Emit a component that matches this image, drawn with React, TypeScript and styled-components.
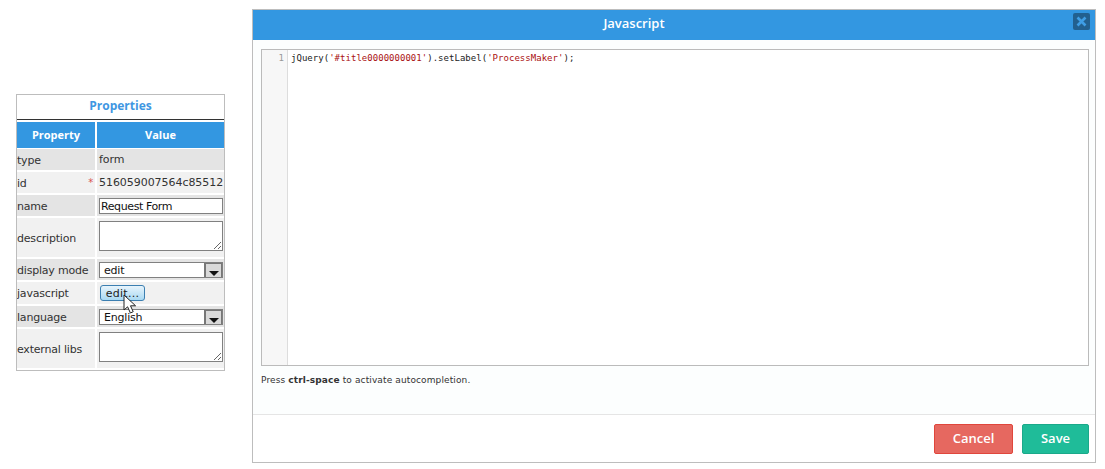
import styled, { createGlobalStyle } from 'styled-components'

const GlobalStyle = createGlobalStyle`
    html, body {
        margin: 0;
        padding: 0;
        background: #fff;
    }
    * {
        box-sizing: border-box;
    }
`

const rows = [
    { label: 'type', kind: 'text', value: 'form', height: 21, shade: 'dark' },
    { label: 'id', kind: 'text', value: '516059007564c85512', height: 21, shade: 'light', required: true },
    { label: 'name', kind: 'input', value: 'Request Form', height: 21, shade: 'dark' },
    { label: 'description', kind: 'textarea', value: '', height: 39, shade: 'light' },
    { label: 'display mode', kind: 'select', value: 'edit', height: 21, shade: 'dark' },
    { label: 'javascript', kind: 'button', value: 'edit...', height: 22, shade: 'light' },
    { label: 'language', kind: 'select', value: 'English', height: 21, shade: 'dark' },
    { label: 'external libs', kind: 'textarea', value: '', height: 39, shade: 'light' },
] as const

const App = () => {
    return (
        <Page>
            <GlobalStyle />
            <Panel>
                <PanelTitle>Properties</PanelTitle>
                <Grid>
                    <HeaderCell>Property</HeaderCell>
                    <HeaderCell>Value</HeaderCell>
                    {rows.map((row) => (
                        <Row key={row.label} $height={row.height}>
                            <LabelCell $shade={row.shade}>
                                {row.label}
                                {'required' in row && <Required>*</Required>}
                            </LabelCell>
                            <ValueCell $shade={row.shade} $top={row.kind === 'textarea'}>
                                {row.kind === 'text' && <ValueText>{row.value}</ValueText>}
                                {row.kind === 'input' && <TextInput defaultValue={row.value} />}
                                {row.kind === 'textarea' && <TextArea />}
                                {row.kind === 'select' && (
                                    <SelectBox>
                                        <SelectValue>{row.value}</SelectValue>
                                        <SelectArrow>
                                            <svg width="10" height="5" viewBox="0 0 10 5">
                                                <path d="M0 0h10L5 5z" fill="#111" />
                                            </svg>
                                        </SelectArrow>
                                    </SelectBox>
                                )}
                                {row.kind === 'button' && (
                                    <EditButton>
                                        {row.value}
                                        <Pointer width="14" height="21" viewBox="0 0 14 21">
                                            <path d="M1 1v15l3.6-3.2L7.4 19l2.8-1.3-2.7-5.9H12.6z" fill="#fff" stroke="#222" strokeWidth="1" />
                                        </Pointer>
                                    </EditButton>
                                )}
                            </ValueCell>
                        </Row>
                    ))}
                </Grid>
            </Panel>
            <Modal>
                <ModalHeader>
                    Javascript
                    <CloseButton>
                        <svg width="11" height="11" viewBox="0 0 11 11">
                            <path d="M1.5 1.5l8 8M9.5 1.5l-8 8" stroke="#3f9ee5" strokeWidth="2.6" fill="none" />
                        </svg>
                    </CloseButton>
                </ModalHeader>
                <ModalBody>
                    <Editor>
                        <Gutter>1</Gutter>
                        <Code>
                            jQuery(<Str>'#title0000000001'</Str>).setLabel(<Str>'ProcessMaker'</Str>);
                        </Code>
                    </Editor>
                    <Hint>
                        Press <strong>ctrl-space</strong> to activate autocompletion.
                    </Hint>
                </ModalBody>
                <ModalFooter>
                    <ActionButton $bg="#e66860" $border="#e0463c">Cancel</ActionButton>
                    <ActionButton $bg="#1fbc99" $border="#1ba98a" $width={67}>Save</ActionButton>
                </ModalFooter>
            </Modal>
        </Page>
    )
}

const Page = styled.div`
    display: flex;
    align-items: flex-start;
    width: 1105px;
    height: 469px;
    padding: 9px 0 0 16px;
    overflow: hidden;
    font-family: "DejaVu Sans", sans-serif;
`

const Panel = styled.div`
    width: 209px;
    height: 277px;
    margin-top: 85px;
    border: 1px solid #bdbdbd;
    background: #fff;
    overflow: hidden;
`

const PanelTitle = styled.div`
    height: 25px;
    border-bottom: 1px solid #333;
    color: #3f97e2;
    font-family: "Open Sans", sans-serif;
    font-size: 12px;
    font-weight: 700;
    line-height: 21px;
    text-align: center;
`

const Grid = styled.div`
    display: grid;
    grid-template-columns: 78px 127px;
    column-gap: 2px;
    row-gap: 2px;
    padding-top: 2px;
`

const HeaderCell = styled.div`
    height: 26px;
    margin-bottom: -1px;
    background: #3397e1;
    color: #fff;
    font-family: "Open Sans", sans-serif;
    font-size: 11px;
    font-weight: 700;
    line-height: 25px;
    text-align: center;
`

const Row = styled.div<{ $height: number }>`
    display: grid;
    grid-column: 1 / -1;
    grid-template-columns: 78px 127px;
    column-gap: 2px;
    height: ${({ $height }) => $height}px;
`

const LabelCell = styled.div<{ $shade: string }>`
    position: relative;
    display: flex;
    align-items: center;
    padding-top: 1px;
    background: ${({ $shade }) => ($shade === 'dark' ? '#e4e4e4' : '#f1f1f1')};
    color: #333;
    font-size: 11px;
    letter-spacing: -0.2px;
`

const Required = styled.span`
    position: absolute;
    top: 5px;
    right: 2px;
    color: #d9534f;
    font-size: 10px;
`

const ValueCell = styled.div<{ $shade: string; $top: boolean }>`
    display: flex;
    align-items: ${({ $top }) => ($top ? 'flex-start' : 'center')};
    padding: ${({ $top }) => ($top ? '3px 1px 0 2px' : '0 1px 0 2px')};
    background: ${({ $shade }) => ($shade === 'dark' ? '#e4e4e4' : '#f1f1f1')};
`

const ValueText = styled.span`
    color: #333;
    font-size: 11px;
    letter-spacing: -0.05px;
`

const TextInput = styled.input`
    width: 124px;
    height: 16px;
    padding: 1px 1px 0;
    border: 1px solid #808080;
    border-radius: 0;
    outline: none;
    background: #fff;
    color: #111;
    font-family: "DejaVu Sans", sans-serif;
    font-size: 11px;
    letter-spacing: -0.4px;
`

const TextArea = styled.textarea`
    display: block;
    width: 124px;
    height: 30px;
    padding: 0;
    border: 1px solid #808080;
    border-radius: 0;
    outline: none;
    background: #fff;
`

const SelectBox = styled.div`
    display: flex;
    width: 124px;
    height: 16px;
    border: 1px solid #808080;
    background: #fff;
`

const SelectValue = styled.span`
    flex: 1;
    padding-left: 4px;
    color: #111;
    font-size: 11px;
    letter-spacing: -0.2px;
    line-height: 15px;
`

const SelectArrow = styled.span`
    display: flex;
    align-items: flex-end;
    justify-content: center;
    width: 18px;
    padding-bottom: 1px;
    border-style: solid;
    border-color: #777;
    border-width: 1px 1px 0 2px;
    background: #d9d9d9;
`

const EditButton = styled.button`
    position: relative;
    width: 45px;
    height: 16px;
    margin-left: 1px;
    padding: 0;
    border: 1px solid #3c7fb1;
    border-radius: 3px;
    background: linear-gradient(#e8f4fc, #a9d9f3);
    color: #222;
    font-family: "DejaVu Sans", sans-serif;
    font-size: 11px;
    letter-spacing: 0.3px;
    line-height: 13px;
`

const Pointer = styled.svg`
    position: absolute;
    top: 8px;
    left: 22px;
`

const Modal = styled.div`
    display: flex;
    flex-direction: column;
    width: 844px;
    height: 454px;
    margin-left: 27px;
    border: 1px solid #bdbdbd;
    background: #fff;
`

const ModalHeader = styled.div`
    position: relative;
    flex: none;
    height: 30px;
    padding-right: 80px;
    background: #3397e1;
    color: #fff;
    font-family: "Open Sans", sans-serif;
    font-size: 13px;
    font-weight: 600;
    line-height: 27px;
    text-align: center;
`

const CloseButton = styled.span`
    position: absolute;
    top: 3px;
    right: 5px;
    display: flex;
    align-items: center;
    justify-content: center;
    width: 17px;
    height: 17px;
    border-radius: 2px;
    background: #22608f;
`

const ModalBody = styled.div`
    flex: 1;
    padding: 9px 6px 0 8px;
    background: #fcfefe;
`

const Editor = styled.div`
    display: flex;
    height: 317px;
    border: 1px solid #bbb;
    background: #fff;
`

const Gutter = styled.div`
    flex: none;
    width: 26px;
    padding: 2px 3px 0 0;
    border-right: 1px solid #ddd;
    background: #f7f7f7;
    color: #999;
    font-family: "DejaVu Sans Mono", monospace;
    font-size: 9px;
    line-height: 13px;
    text-align: right;
`

const Code = styled.div`
    padding: 2px 0 0 3px;
    color: #222;
    font-family: "DejaVu Sans Mono", monospace;
    font-size: 9px;
    letter-spacing: 0.03px;
    line-height: 13px;
    white-space: pre;
`

const Str = styled.span`
    color: #a11;
`

const Hint = styled.div`
    margin-top: 8px;
    color: #333;
    font-size: 9px;
    letter-spacing: 0.12px;
    line-height: 13px;
`

const ModalFooter = styled.div`
    display: flex;
    flex: none;
    justify-content: flex-end;
    gap: 9px;
    height: 48px;
    padding: 9px 6px 0 0;
    border-top: 1px solid #e5e5e5;
`

const ActionButton = styled.button<{ $bg: string; $border: string; $width?: number }>`
    width: ${({ $width }) => $width ?? 79}px;
    height: 30px;
    padding: 0 0 2px;
    border: 1px solid ${({ $border }) => $border};
    border-radius: 2px;
    background: ${({ $bg }) => $bg};
    color: #fff;
    font-family: "Open Sans", sans-serif;
    font-size: 13px;
    font-weight: 600;
`

export default App
